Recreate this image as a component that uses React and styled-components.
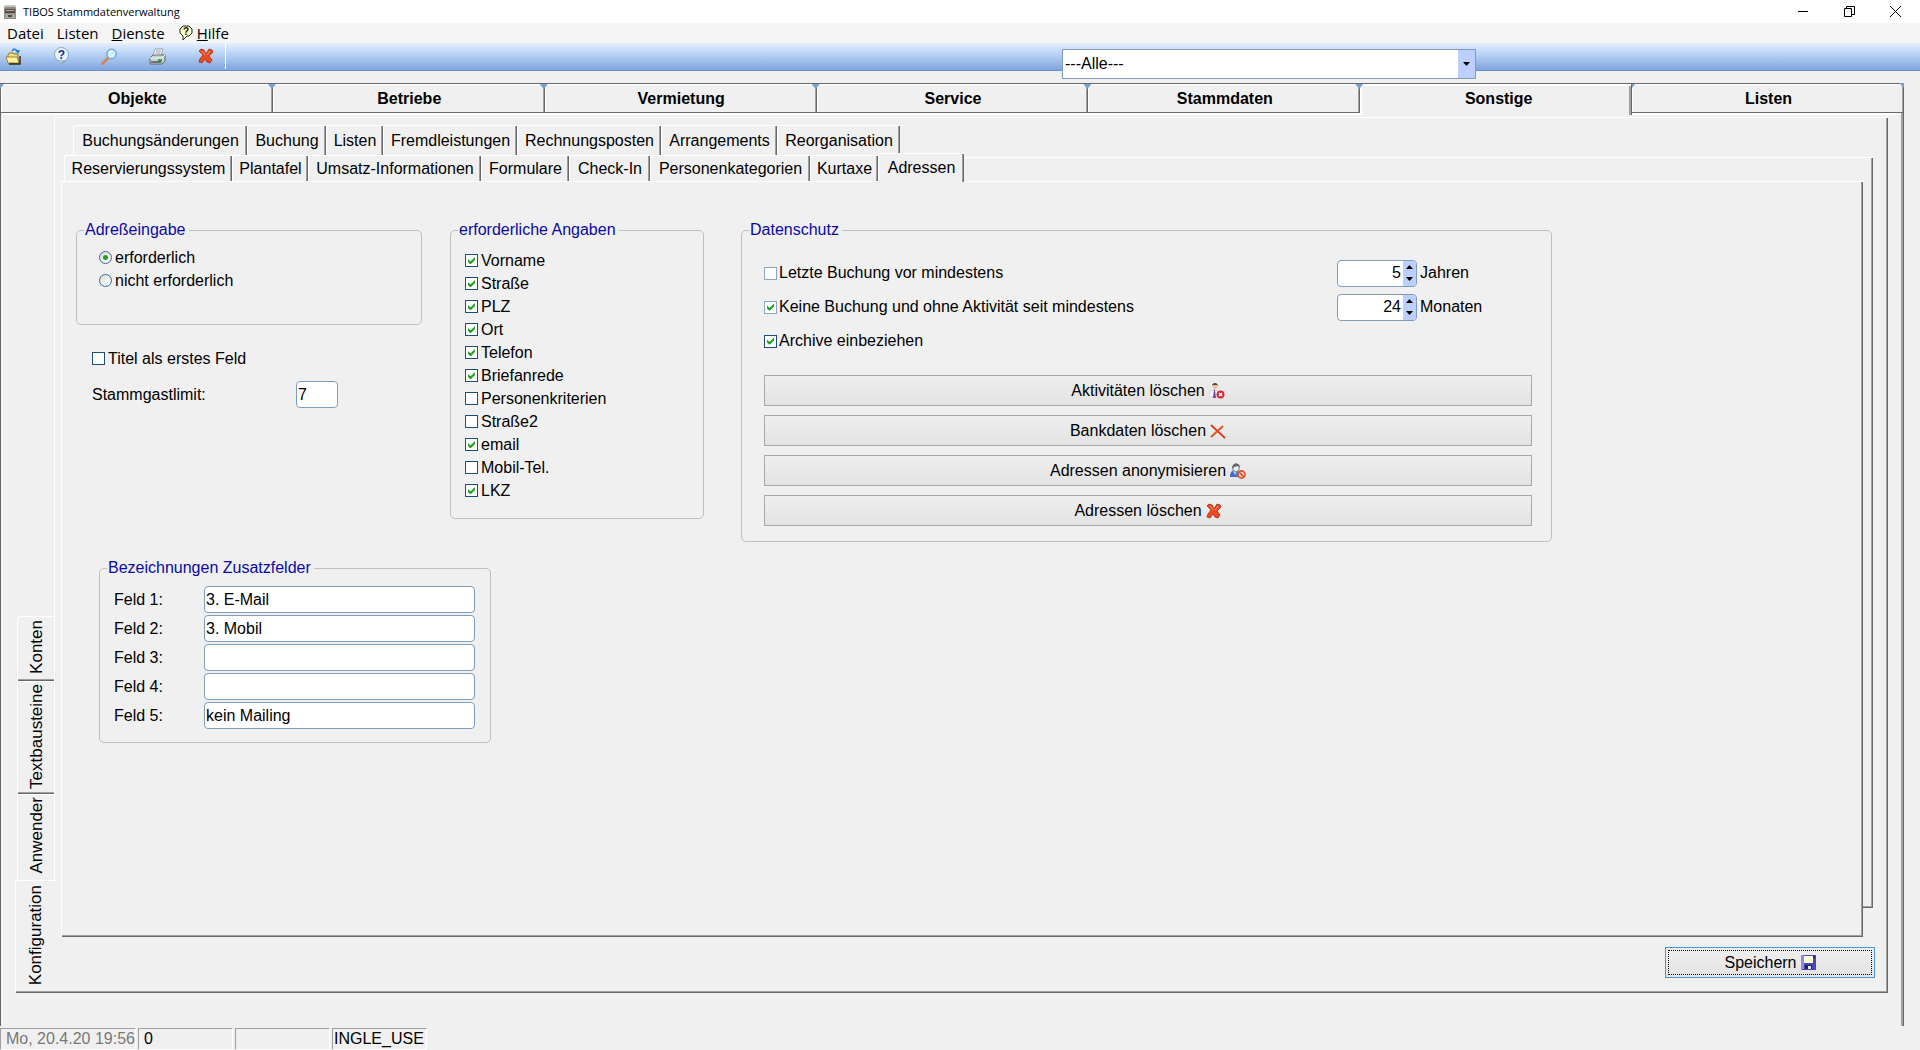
import React, { useState } from 'react'
import styled, { createGlobalStyle, css } from 'styled-components'

const mainTabs = ['Objekte', 'Betriebe', 'Vermietung', 'Service', 'Stammdaten', 'Sonstige', 'Listen']

const sideTabs = [
    { label: 'Konten', size: 65 },
    { label: 'Textbausteine', size: 113 },
    { label: 'Anwender', size: 86 },
    { label: 'Konfiguration', size: 113 },
]

const upperTabs = [
    { label: 'Buchungsänderungen', width: 174 },
    { label: 'Buchung', width: 79 },
    { label: 'Listen', width: 57 },
    { label: 'Fremdleistungen', width: 134 },
    { label: 'Rechnungsposten', width: 144 },
    { label: 'Arrangements', width: 116 },
    { label: 'Reorganisation', width: 123 },
]

const lowerTabs = [
    { label: 'Reservierungssystem', width: 168 },
    { label: 'Plantafel', width: 76 },
    { label: 'Umsatz-Informationen', width: 173 },
    { label: 'Formulare', width: 88 },
    { label: 'Check-In', width: 81 },
    { label: 'Personenkategorien', width: 160 },
    { label: 'Kurtaxe', width: 68 },
    { label: 'Adressen', width: 86 },
]

const requiredFields = [
    ['Vorname', true],
    ['Straße', true],
    ['PLZ', true],
    ['Ort', true],
    ['Telefon', true],
    ['Briefanrede', true],
    ['Personenkriterien', false],
    ['Straße2', false],
    ['email', true],
    ['Mobil-Tel.', false],
    ['LKZ', true],
]

const extraFields = ['3. E-Mail', '3. Mobil', '', '', 'kein Mailing']

const AppIcon = () => (
    <svg width="12" height="16" viewBox="0 0 12 16" aria-hidden="true">
        <path d="M1 1h10l1 3v11H0V4z" fill="#8d8d86" />
        <path d="M1 1h10v2H1z" fill="#c4c4bc" />
        <path d="M1 5h10v4H1z" fill="#5b4a4a" />
        <path d="M2 6h8v1H2z" fill="#c9a3a3" />
        <path d="M1 10h10v4H1z" fill="#a8a8a0" />
        <path d="M4 11h4v2H4z" fill="#4a4a46" />
    </svg>
)

const BalloonIcon = () => (
    <svg width="16" height="17" viewBox="0 0 16 17" aria-hidden="true">
        <path d="M5 1h6l3 3v4l-3 3H9l-4 4v-4L2 8V4z" fill="#ffffc8" stroke="#222" />
        <text x="8" y="10" fontFamily="Liberation Sans" fontSize="10" fontWeight="700" textAnchor="middle" fill="#111">?</text>
    </svg>
)

const FolderIcon = () => (
    <svg width="17" height="17" viewBox="0 0 17 17" aria-hidden="true">
        <path d="M7 3c2-3 4-2 5 0" fill="none" stroke="#2f7ec4" strokeWidth="1.500" />
        <path d="M10 2h5l-2 4z" fill="#2f7ec4" />
        <path d="M3 7l1-2h4l1 1h4v9H3z" fill="#f3dc7c" stroke="#8d7a2c" />
        <path d="M1 9h11l2 6H3z" fill="#fff2a4" stroke="#9a862e" />
        <path d="M15 8v8H4" fill="none" stroke="#2b2a14" strokeWidth="1.400" />
    </svg>
)

const HelpIcon = () => (
    <svg width="17" height="18" viewBox="0 0 17 18" aria-hidden="true">
        <path d="M9 13l-1 5 5-5z" fill="#6c8494" />
        <circle cx="8.500" cy="7.500" r="7" fill="#e8f3fc" stroke="#8aa5bd" />
        <path d="M5 13l4 4 2-4z" fill="#a9c4d6" />
        <text x="8.500" y="12" fontSize="12" fontWeight="700" textAnchor="middle" fill="#132e8e">?</text>
    </svg>
)

const LensIcon = () => (
    <svg width="17" height="17" viewBox="0 0 17 17" aria-hidden="true">
        <path d="M1 16l6-6" stroke="#d98445" strokeWidth="2.600" strokeLinecap="round" />
        <circle cx="10.500" cy="6" r="4.700" fill="#d3f0fd" stroke="#6fa6dc" strokeWidth="1.500" />
        <path d="M8 5c1-2 2-2 4-2" fill="none" stroke="#fff" strokeWidth="1.400" />
    </svg>
)

const PrinterIcon = () => (
    <svg width="17" height="17" viewBox="0 0 17 17" aria-hidden="true">
        <path d="M6 1h8l-2 7H4z" fill="#fdfdfd" stroke="#8292a0" strokeWidth="0.800" />
        <path d="M7 3h5M6.500 5h5" stroke="#8a9aa8" />
        <path d="M1 10l3-3h12v6l-3 3H1z" fill="#c8d0d4" stroke="#5d6b70" />
        <path d="M1 10h12l3-3" fill="none" stroke="#f4f8f8" />
        <path d="M9 11h4v3H9z" fill="#37a83d" />
        <path d="M2 14h10" stroke="#4e585c" strokeWidth="1.500" />
    </svg>
)

const CrossIcon = () => (
    <svg width="16" height="16" viewBox="0 0 16 16" aria-hidden="true">
        <path
            d="M3 1l3 1 2 4 3-5 3 1 1 2-4 4 3 4-2 3-3-1-2-3-3 4-3-1 1-3 3-4-4-4z"
            fill="#ee4a22"
            stroke="#b8301a"
            strokeWidth="0.900"
            strokeLinejoin="round"
        />
        <path d="M4 3l3 4M12 3L9 7" stroke="#ff9a6c" fill="none" />
    </svg>
)

const ThinCrossIcon = () => (
    <svg width="16" height="16" viewBox="0 0 16 16" aria-hidden="true">
        <path d="M1 2l14 13" stroke="#dd3a1c" strokeWidth="1.800" />
        <path d="M13 3L1 14" stroke="#e2501c" strokeWidth="1.800" />
    </svg>
)

const PersonDeleteIcon = () => (
    <svg width="16" height="16" viewBox="0 0 16 16" aria-hidden="true">
        <path d="M0 14c0-5 1-6 4-7h3c3 1 4 3 4 7z" fill="#f5f4f8" stroke="#c9c7d0" strokeWidth="0.700" />
        <path d="M5 7h1l1 8H4z" fill="#6d4a9c" />
        <path d="M4 2h4v3L6 7 4 5z" fill="#efc09a" />
        <path d="M3 3c0-4 6-4 6 0L8 2H4z" fill="#59402c" />
        <circle cx="11.500" cy="11.500" r="4" fill="#cc2f3a" />
        <path d="M10 10l3 3M13 10l-3 3" stroke="#fff" strokeWidth="1.300" />
    </svg>
)

const PersonBlockIcon = () => (
    <svg width="16" height="16" viewBox="0 0 16 16" aria-hidden="true">
        <path d="M0 14c0-5 2-7 5-7s5 2 5 7z" fill="#4270c4" />
        <path d="M3 8l2 4 2-4z" fill="#bcd3f4" />
        <path d="M3 4c0-4 6-4 6 0v3L6 9 3 7z" fill="#eceef0" stroke="#667076" strokeWidth="0.800" />
        <path d="M2 6c0-7 8-7 8-1L8 3 4 4z" fill="#5d666a" />
        <circle cx="11.500" cy="11.500" r="3.600" fill="#f7cdbc" stroke="#e0512e" strokeWidth="1.600" />
        <path d="M9 9l5 5" stroke="#e0512e" strokeWidth="1.600" />
    </svg>
)

const DiskIcon = () => (
    <svg width="15" height="15" viewBox="0 0 15 15" aria-hidden="true">
        <path d="M0 0h15v15H1l-1-1z" fill="#4b47b4" />
        <path d="M0 0h3v14H0z" fill="#8f8ce6" />
        <path d="M3 1h9v7H3z" fill="#fbfbd8" />
        <path d="M12 1h2v2h-2z" fill="#26246e" />
        <path d="M4 10h7v4H4z" fill="#25234f" />
        <path d="M7 11h3v3H7z" fill="#e4e4f2" />
    </svg>
)

const Arrow = ({ up }) => (
    <svg width="7" height="4" viewBox="0 0 7 4" aria-hidden="true">
        <path d={up ? 'M0 4L3.500 0 7 4z' : 'M0 0h7L3.500 4z'} fill="#000" />
    </svg>
)

const Check = ({ label, checked, pale }) => (
    <CheckLabel>
        <CheckInput type="checkbox" defaultChecked={checked} $pale={pale} />
        {label}
    </CheckLabel>
)

const Spinner = ({ label, start }) => {
    const [value, setValue] = useState(start)

    return (
        <SpinnerLabel>
            <SpinnerBox>
                <SpinnerInput value={value} onChange={(e) => setValue(e.target.value)} />
                <Stepper>
                    <StepButton type="button" aria-label="mehr" onClick={() => setValue(Number(value) + 1)}>
                        <Arrow up />
                    </StepButton>
                    <StepButton type="button" aria-label="weniger" onClick={() => setValue(Number(value) - 1)}>
                        <Arrow />
                    </StepButton>
                </Stepper>
            </SpinnerBox>
            {label}
        </SpinnerLabel>
    )
}

const App = () => {
    return (
        <>
            <GlobalStyle />
            <Window>
                <TitleBar>
                    <AppIcon />
                    <Title>TIBOS Stammdatenverwaltung</Title>
                    <WindowButtons>
                        <WindowButton aria-label="Minimieren">
                            <svg width="11" height="11" viewBox="0 0 11 11"><path d="M0 5.500h10" stroke="#000" /></svg>
                        </WindowButton>
                        <WindowButton aria-label="Wiederherstellen">
                            <svg width="11" height="11" viewBox="0 0 11 11">
                                <path d="M.5 2.500h7v8h-7zM2.500 2.500v-2h8v8h-3" fill="none" stroke="#000" />
                            </svg>
                        </WindowButton>
                        <WindowButton aria-label="Schließen">
                            <svg width="11" height="11" viewBox="0 0 11 11"><path d="M0 0l11 11M11 0L0 11" stroke="#000" /></svg>
                        </WindowButton>
                    </WindowButtons>
                </TitleBar>

                <MenuBar>
                    <MenuItem>Datei</MenuItem>
                    <MenuItem>Listen</MenuItem>
                    <MenuItem><u>D</u>ienste</MenuItem>
                    <MenuItem><BalloonIcon /><span><u>H</u>ilfe</span></MenuItem>
                </MenuBar>

                <Toolbar>
                    <Tools>
                        <ToolButton aria-label="Öffnen"><FolderIcon /></ToolButton>
                        <ToolButton aria-label="Hilfe"><HelpIcon /></ToolButton>
                        <ToolButton aria-label="Suchen"><LensIcon /></ToolButton>
                        <ToolButton aria-label="Drucken"><PrinterIcon /></ToolButton>
                        <ToolButton aria-label="Löschen"><CrossIcon /></ToolButton>
                    </Tools>
                    <SelectBox>
                        <Select aria-label="Betrieb" defaultValue="alle">
                            <option value="alle">---Alle---</option>
                        </Select>
                        <SelectArrow><Arrow /></SelectArrow>
                    </SelectBox>
                </Toolbar>

                <MainTabs role="tablist">
                    {mainTabs.map((label) => (
                        <MainTab key={label} role="tab" $active={label === 'Sonstige'}>{label}</MainTab>
                    ))}
                </MainTabs>

                <Body>
                    <Workspace>
                        <Rail role="tablist">
                            {sideTabs.map(({ label, size }) => (
                                <SideTab key={label} role="tab" $size={size} $active={label === 'Konfiguration'}>
                                    <span>{label}</span>
                                </SideTab>
                            ))}
                        </Rail>
                        <Sheet>
                            <TabArea>
                                <TabRow $indent={12} $height={30} role="tablist">
                                    {upperTabs.map(({ label, width }) => (
                                        <Tab key={label} role="tab" $width={width}>{label}</Tab>
                                    ))}
                                </TabRow>
                                <TabRow $indent={3} $height={26} role="tablist">
                                    {lowerTabs.map(({ label, width }) => (
                                        <Tab key={label} role="tab" $width={width} $active={label === 'Adressen'}>{label}</Tab>
                                    ))}
                                </TabRow>
                                <Page>
                                    <Columns>
                                        <div>
                                            <Group $width={346} $pad="7px 22px 32px">
                                                <legend>Adreßeingabe</legend>
                                                <CheckLabel>
                                                    <RadioInput type="radio" name="adresse" defaultChecked />
                                                    erforderlich
                                                </CheckLabel>
                                                <CheckLabel>
                                                    <RadioInput type="radio" name="adresse" />
                                                    nicht erforderlich
                                                </CheckLabel>
                                            </Group>
                                            <Loose>
                                                <Check label="Titel als erstes Feld" />
                                                <LimitRow>
                                                    <label htmlFor="limit">Stammgastlimit:</label>
                                                    <TextInput id="limit" defaultValue="7" $width={42} />
                                                </LimitRow>
                                            </Loose>
                                        </div>

                                        <Group $width={254} $pad="10px 14px 16px">
                                            <legend>erforderliche Angaben</legend>
                                            {requiredFields.map(([label, checked]) => (
                                                <Check key={label} label={label} checked={checked} />
                                            ))}
                                        </Group>

                                        <Group $pad="17px 19px 15px 22px">
                                            <legend>Datenschutz</legend>
                                            <PrivacyRow>
                                                <Check label="Letzte Buchung vor mindestens" pale />
                                                <Spinner label="Jahren" start={5} />
                                            </PrivacyRow>
                                            <PrivacyRow>
                                                <Check label="Keine Buchung und ohne Aktivität seit mindestens" checked pale />
                                                <Spinner label="Monaten" start={24} />
                                            </PrivacyRow>
                                            <PrivacyRow>
                                                <Check label="Archive einbeziehen" checked />
                                            </PrivacyRow>
                                            <Actions>
                                                <Button>Aktivitäten löschen<PersonDeleteIcon /></Button>
                                                <Button>Bankdaten löschen<ThinCrossIcon /></Button>
                                                <Button>Adressen anonymisieren<PersonBlockIcon /></Button>
                                                <Button>Adressen löschen<CrossIcon /></Button>
                                            </Actions>
                                        </Group>
                                    </Columns>

                                    <ExtraGroup $width={392} $pad="9px 14px 13px">
                                        <legend>Bezeichnungen Zusatzfelder</legend>
                                        <FieldGrid>
                                            {extraFields.map((value, i) => (
                                                <React.Fragment key={i}>
                                                    <label htmlFor={`feld${i + 1}`}>Feld {i + 1}:</label>
                                                    <TextInput id={`feld${i + 1}`} defaultValue={value} $width={271} />
                                                </React.Fragment>
                                            ))}
                                        </FieldGrid>
                                    </ExtraGroup>
                                </Page>
                            </TabArea>
                            <Footer>
                                <SaveButton>Speichern<DiskIcon /></SaveButton>
                            </Footer>
                        </Sheet>
                    </Workspace>
                </Body>

                <StatusBar>
                    <StatusCell $width={136} $muted>Mo, 20.4.20 19:56</StatusCell>
                    <StatusCell $width={95}>0</StatusCell>
                    <StatusCell $width={95} />
                    <StatusCell $width={95} $tight>INGLE_USE</StatusCell>
                </StatusBar>
            </Window>
        </>
    )
}

export default App


const face = '#f0f0f0'
const dark = '#696969'
const mid = '#a0a0a0'
const fieldBorder = '#7f9db9'

const raised = css`
    border: 0 solid #fff;
    border-top-width: 1px;
    border-left-width: 1px;
    padding: 0 2px 2px 0;
    background: ${face};
    box-shadow: inset -1px -1px ${dark}, inset -2px -2px ${mid};
`

const GlobalStyle = createGlobalStyle`
    * {
        box-sizing: border-box;
    }

    body {
        margin: 0;
        background: ${face};
        color: #000;
        font: 16px/18px "Liberation Sans", Arial, sans-serif;
    }

    button, input, select {
        font: inherit;
        color: inherit;
        margin: 0;
        padding: 0;
        border: 0;
        background: none;
    }

    svg {
        display: block;
        flex: none;
    }
`

const Window = styled.div`
    display: flex;
    flex-direction: column;
    min-height: 100vh;
`

const TitleBar = styled.header`
    display: flex;
    align-items: center;
    height: 23px;
    padding-left: 4px;
    background: #fff;
`

const Title = styled.span`
    margin-left: 7px;
    font: 11px/16px "Open Sans", "Segoe UI", sans-serif;
`

const WindowButtons = styled.div`
    display: flex;
    margin-left: auto;
    padding-right: 2px;
`

const WindowButton = styled.button`
    display: flex;
    align-items: center;
    justify-content: center;
    width: 46px;
    height: 20px;
`

const MenuBar = styled.nav`
    display: flex;
    align-items: center;
    gap: 13px;
    height: 20px;
    padding-left: 7px;
    background: #f5f5f5;
`

const MenuItem = styled.button`
    display: flex;
    align-items: center;
    font: 15px/20px "Open Sans", "Segoe UI", sans-serif;

    svg {
        margin-right: 3px;
    }
`

const Toolbar = styled.div`
    display: flex;
    justify-content: space-between;
    align-items: flex-start;
    height: 40px;
    background:
        linear-gradient(#6e8fc4, #6e8fc4) 0 27px / 100% 1px no-repeat,
        linear-gradient(#e3effd, #c4dbf8 30%, #7fa5de) 0 0 / 100% 27px no-repeat;
`

const Tools = styled.div`
    display: flex;
    align-items: center;
    gap: 31px;
    height: 26px;
    padding: 0 11px 0 5px;
    border-right: 1px solid #fff;
`

const ToolButton = styled.button`
    display: flex;
    justify-content: center;
    width: 17px;
`

const SelectBox = styled.div`
    position: relative;
    width: 414px;
    margin: 6px 444px 0 0;
`

const Select = styled.select`
    appearance: none;
    width: 100%;
    height: 30px;
    padding: 0 20px 0 2px;
    border: 1px solid ${fieldBorder};
    border-radius: 0;
    background: #fff;
`

const SelectArrow = styled.span`
    position: absolute;
    top: 1px;
    right: 1px;
    bottom: 1px;
    display: flex;
    align-items: center;
    justify-content: center;
    width: 17px;
    background: #bccfff;
    pointer-events: none;
`

const MainTabs = styled.div`
    display: grid;
    grid-template-columns: repeat(7, 1fr);
    height: 30px;
    margin-right: 16px;
    border-left: 1px solid ${dark};
`

const MainTab = styled.button`
    position: relative;
    padding: 2px 0 0 2px;
    border: 0 solid ${dark};
    border-width: 1px 1px 1px 0;
    box-shadow: inset 1px 1px #fff, inset -1px 0 ${mid};
    background: ${face};
    font-weight: bold;

    &::before {
        content: "";
        position: absolute;
        top: 0;
        left: -5px;
        width: 8px;
        height: 5px;
        background: #7b9fd3;
        clip-path: polygon(0 0, 100% 0, 50% 100%);
    }

    &:last-child::after {
        content: "";
        position: absolute;
        top: -1px;
        right: -1px;
        width: 5px;
        height: 5px;
        background: #7b9fd3;
        clip-path: polygon(0 0, 100% 0, 100% 100%);
    }

    ${({ $active }) => $active && css`
        z-index: 1;
        margin-bottom: -2px;
        padding: 2px 0 3px 6px;
        border-bottom: 0;
        box-shadow: inset 2px 2px #fff, inset -2px 0 ${mid};
    `}
`

const Body = styled.main`
    display: flex;
    flex: 1;
    margin: 0 16px 2px 0;
    padding: 4px 15px 33px;
    border: 0 solid ${dark};
    border-width: 0 1px;
    box-shadow: inset -2px 0 ${mid}, inset 1px 0 ${face}, inset 2px 2px #fff;
`

const Workspace = styled.div`
    display: flex;
    flex: 1;
`

const Rail = styled.div`
    display: flex;
    flex-direction: column;
    justify-content: flex-end;
    align-items: flex-end;
    width: 38px;
`

const SideTab = styled.button`
    display: flex;
    align-items: center;
    justify-content: center;
    width: 37px;
    height: ${({ $size }) => $size}px;
    padding: 0 0 4px 1px;
    border-top: 1px solid #fff;
    border-left: 1px solid #fff;
    border-radius: 3px 0 0 0;
    box-shadow: inset 0 -1px ${dark}, inset 0 -2px ${mid};
    font-size: 17px;

    span {
        writing-mode: vertical-rl;
        transform: rotate(180deg);
    }

    &:nth-last-child(2) {
        box-shadow: none;
    }

    ${({ $active }) => $active && css`
        z-index: 1;
        width: 41px;
        margin-right: -2px;
        padding-right: 2px;
        background: ${face};
    `}
`

const Sheet = styled.div`
    ${raised}
    display: flex;
    flex: 1;
    flex-direction: column;
`

const TabArea = styled.div`
    position: relative;
    display: flex;
    flex: 1;
    flex-direction: column;
    margin: 7px 23px 0 6px;

    /* page of the upper row, peeking out behind the front one */
    &::before {
        ${raised}
        content: "";
        position: absolute;
        inset: 32px -10px 29px 10px;
    }
`

const TabRow = styled.div`
    position: relative;
    display: flex;
    height: ${({ $height }) => $height}px;
    padding-left: ${({ $indent }) => $indent}px;
`

const Tab = styled.button`
    width: ${({ $width }) => $width}px;
    border-top: 1px solid #fff;
    border-left: 1px solid #fff;
    border-radius: 3px 0 0 0;
    background: ${face};
    box-shadow: inset -1px 0 ${dark}, inset -2px 0 ${mid};
    white-space: nowrap;

    ${({ $active }) => $active && css`
        z-index: 1;
        margin: -2px 0 -1px;
    `}
`

const Page = styled.section`
    ${raised}
    position: relative;
    flex: 1;
    padding: 39px 14px 24px;
`

const Columns = styled.div`
    display: grid;
    grid-template-columns: 374px 291px minmax(0, 811px);
    align-items: start;
`

const Group = styled.fieldset`
    width: ${({ $width }) => ($width ? `${$width}px` : 'auto')};
    min-width: 0;
    margin: 0;
    padding: ${({ $pad }) => $pad};
    border: 1px solid #bfbfbf;
    border-radius: 5px;

    legend {
        margin-left: ${({ $pad }) => 7 - parseInt($pad.split(' ')[3] || $pad.split(' ')[1])}px;
        padding: 0 3px 0 1px;
        color: #0a0aa0;
    }
`

const ExtraGroup = styled(Group)`
    margin: 17px 0 0 23px;
`

const Loose = styled.div`
    padding: 22px 16px 0;
`

const LimitRow = styled.div`
    display: grid;
    grid-template-columns: 204px auto;
    align-items: center;
    justify-content: start;
    margin-top: 11px;
`

const CheckLabel = styled.label`
    display: flex;
    align-items: center;
    gap: 3px;
    height: 23px;
`

const CheckInput = styled.input`
    appearance: none;
    flex: none;
    width: 13px;
    height: 13px;
    border: 1px solid ${({ $pale }) => ($pale ? '#8ba6c1' : '#1c4d7c')};
    background: #fff;

    &:checked::before {
        content: "";
        display: block;
        width: 11px;
        height: 11px;
        background: #21a121;
        clip-path: polygon(2px 4px, 4px 6px, 5px 6px, 9px 2px, 9px 5px, 5px 9px, 4px 9px, 2px 7px);
    }
`

const RadioInput = styled.input`
    appearance: none;
    flex: none;
    display: flex;
    align-items: center;
    justify-content: center;
    width: 13px;
    height: 13px;
    border: 1px solid #3c6890;
    border-radius: 50%;
    background: linear-gradient(135deg, #dcdcd8, #fff);

    &:checked::before {
        content: "";
        width: 5px;
        height: 5px;
        border-radius: 50%;
        background: #21a121;
    }
`

const TextInput = styled.input`
    width: ${({ $width }) => $width}px;
    height: 27px;
    padding: 0 1px;
    border: 1px solid ${fieldBorder};
    border-radius: 4px;
    background: #fff;
`

const PrivacyRow = styled.div`
    display: flex;
    align-items: center;
    justify-content: space-between;
    height: 34px;

    ${CheckLabel} {
        gap: 2px;
    }
`

const SpinnerLabel = styled.label`
    display: flex;
    align-items: center;
    gap: 3px;
    width: 195px;
`

const SpinnerBox = styled.span`
    display: flex;
    width: 80px;
    height: 27px;
    border: 1px solid ${fieldBorder};
    border-radius: 4px;
    overflow: hidden;
    background: #fff;
`

const SpinnerInput = styled.input`
    flex: 1;
    min-width: 0;
    padding-right: 2px;
    text-align: right;
`

const Stepper = styled.span`
    display: flex;
    flex-direction: column;
    width: 13px;
    padding-right: 1px;
    background: #bccfff;
`

const StepButton = styled.button`
    display: flex;
    flex: 1;
    align-items: center;
    justify-content: center;
`

const Actions = styled.div`
    display: grid;
    gap: 9px;
    margin-top: 17px;
`

const Button = styled.button`
    display: flex;
    align-items: center;
    justify-content: center;
    gap: 4px;
    height: 31px;
    border: 1px solid #a9a9a9;
    background: linear-gradient(#efefef, #e3e3e3);
`

const SaveButton = styled(Button)`
    width: 210px;
    border-color: #4a94d8;
    outline: 1px dotted #000;
    outline-offset: -4px;
`

const FieldGrid = styled.div`
    display: grid;
    grid-template-columns: 90px auto;
    align-items: center;
    justify-content: start;
    row-gap: 2px;
`

const Footer = styled.footer`
    display: flex;
    justify-content: flex-end;
    padding: 10px 11px 13px;
`

const StatusBar = styled.footer`
    display: flex;
    gap: 2px;
    height: 22px;
`

const StatusCell = styled.div`
    width: ${({ $width }) => $width}px;
    padding-left: ${({ $tight }) => ($tight ? 1 : 5)}px;
    border: 1px solid ${mid};
    border-right-color: #fff;
    border-bottom-color: #fff;
    color: ${({ $muted }) => ($muted ? '#787878' : '#000')};
    line-height: 20px;
    white-space: nowrap;
    overflow: hidden;
`
